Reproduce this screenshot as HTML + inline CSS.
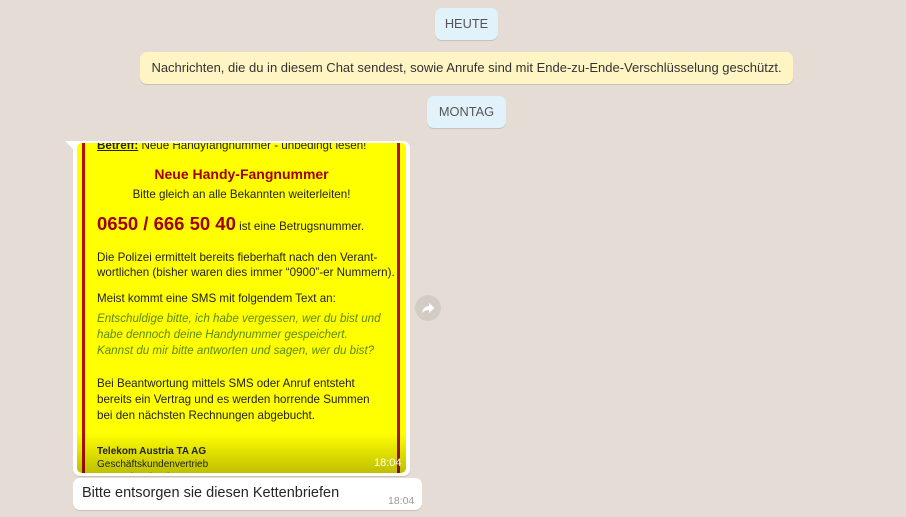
<!DOCTYPE html><html><head><style>
body{margin:0;width:906px;height:517px;overflow:hidden;background:#e5ddd5;font-family:"Liberation Sans",sans-serif;position:relative}
.pill{position:absolute;background:#e1f2fb;border-radius:7px;color:#555;font-size:12.8px;text-align:center;line-height:32px;box-shadow:0 1px 0.5px rgba(0,0,0,.13)}
.enc{position:absolute;left:140px;top:52px;width:653px;height:32px;background:#fff5c4;border-radius:7px;font-size:13px;color:#333;line-height:32px;text-align:center;box-shadow:0 1px 0.5px rgba(0,0,0,.13)}
.bub{position:absolute;background:#fff;border-radius:7px;box-shadow:0 1px 0.5px rgba(0,0,0,.13)}
.img{position:absolute;left:77px;top:143px;width:329px;height:330px;background:#ffff00;overflow:hidden;border-radius:5px;font-size:11.6px;color:#222}
.img .bl{position:absolute;top:0;bottom:0;width:3px;background:#b01010}
.img p{position:absolute;margin:0;left:20px;white-space:nowrap}
.r{color:#a00000;font-weight:bold}
.g{color:#5a8a10;font-style:italic}
</style></head><body>
<div class="pill" style="left:435px;top:8px;width:63px">HEUTE</div>
<div class="enc">Nachrichten, die du in diesem Chat sendest, sowie Anrufe sind mit Ende-zu-Ende-Verschlüsselung geschützt.</div>
<div class="pill" style="left:427px;top:96px;width:79px">MONTAG</div>
<div class="bub" style="left:73px;top:141px;width:337px;height:335px;border-top-left-radius:0"></div>
<div style="position:absolute;left:65px;top:141px;width:0;height:0;border-top:8px solid #fff;border-left:8px solid transparent"></div>
<div class="img">
<div class="bl" style="left:5px"></div><div class="bl" style="right:6px"></div>
<p style="top:-4px"><u><b>Betreff:</b></u> Neue Handyfangnummer - unbedingt lesen!</p>
<p class="r" style="top:23px;left:0;width:329px;text-align:center;font-size:14px">Neue Handy-Fangnummer</p>
<p style="top:45px;left:0;width:329px;text-align:center">Bitte gleich an alle Bekannten weiterleiten!</p>
<p style="top:70px"><span class="r" style="font-size:18.5px">0650 / 666 50 40</span> ist eine Betrugsnummer.</p>
<p style="top:107px;line-height:15px">Die Polizei ermittelt bereits fieberhaft nach den Verant-<br>wortlichen (bisher waren dies immer “0900”-er Nummern).</p>
<p style="top:149px">Meist kommt eine SMS mit folgendem Text an:</p>
<p class="g" style="top:168px;line-height:16px">Entschuldige bitte, ich habe vergessen, wer du bist und<br>habe dennoch deine Handynummer gespeichert.<br>Kannst du mir bitte antworten und sagen, wer du bist?</p>
<p style="top:233px;line-height:16px">Bei Beantwortung mittels SMS oder Anruf entsteht<br>bereits ein Vertrag und es werden horrende Summen<br>bei den nächsten Rechnungen abgebucht.</p>
<div style="position:absolute;left:0;right:0;bottom:0;height:40px;background:linear-gradient(transparent,rgba(0,0,0,.25))"></div>
<p style="top:302px;font-size:10px;line-height:13px"><b>Telekom Austria TA AG</b><br>Geschäftskundenvertrieb<br>International Sales</p>
<p style="top:314px;left:297px;color:#fff;font-size:11px">18:04</p>
</div>
<svg style="position:absolute;left:415px;top:295px" width="26" height="26" viewBox="0 0 26 26"><circle cx="13" cy="13" r="13" fill="#d3ccc5"/><path d="M14 8 L19.5 13 L14 18 V15 C10.5 15 8.5 16 7 18.5 C7.5 14 10 11.2 14 11 Z" fill="#fff"/></svg>
<div class="bub" style="left:73px;top:478px;width:349px;height:32px"></div>
<div style="position:absolute;left:82px;top:485px;font-size:14.5px;color:#262626">Bitte entsorgen sie diesen Kettenbriefen</div>
<div style="position:absolute;left:388px;top:495px;font-size:10.5px;color:#999">18:04</div>
</body></html>
